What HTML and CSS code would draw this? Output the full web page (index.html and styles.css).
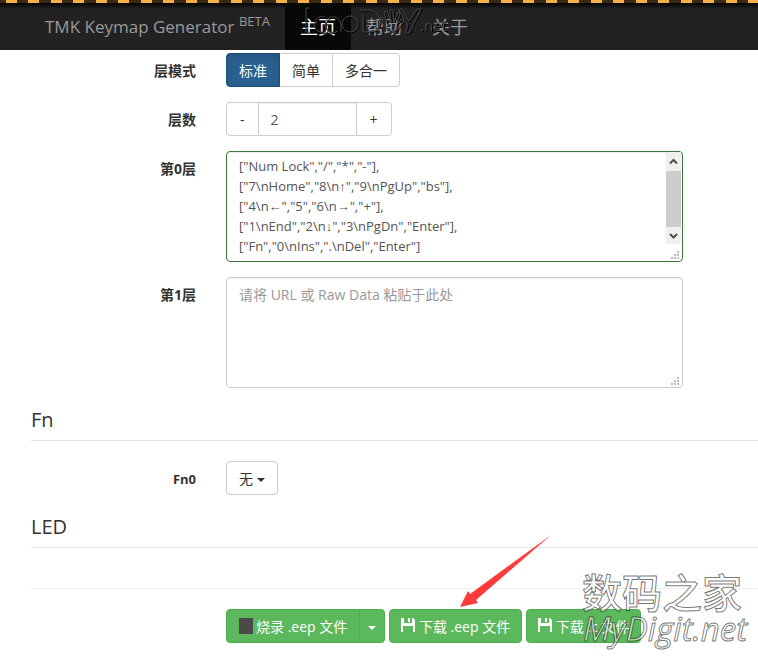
FILE: index.html
```html
<!DOCTYPE html>
<html lang="zh-CN">
<head>
<meta charset="utf-8">
<meta name="viewport" content="width=device-width, initial-scale=1">
<title>TMK Keymap Generator</title>
<link rel="stylesheet" href="styles.css">
</head>
<body>
<header class="navbar">
  <a class="brand" href="#">TMK Keymap Generator <sup class="beta">BETA</sup></a>
  <nav class="nav">
    <a class="nav-link active" href="#">主页</a>
    <a class="nav-link" href="#">帮助</a>
    <a class="nav-link" href="#">关于</a>
  </nav>
  <svg class="nav-mark" width="170" height="38" viewBox="0 0 170 38" aria-hidden="true">
    <g fill="none" stroke="#484848" stroke-linecap="round" stroke-linejoin="round">
      <path d="M5 4H2V28H5M21 13a8 8 0 1 0 0 15M37 28V20a8 8 0 1 0-3 7M38 20a8 8 0 1 1 16 0a8 8 0 1 1-16 0M56 6H66Q77 9 76 19Q74 29 62 28H59V11M98 5l7 12L113 5h4L105 29h-4l3-8-9-15z"/>
      <path d="M82 24l-6-9 2-2 5 6-3-11 3-1 4 11-1-12h3l1 12 4-10 2 1-3 11 5-5 2 2-7 9q-6 3-11-2z"/>
    </g>
    <text class="mark-text" x="116" y="27">.net</text>
  </svg>
</header>

<main class="page">
  <form class="form">
    <div class="row">
      <span class="label" id="mode-label">层模式</span>
      <div class="group" role="group" aria-labelledby="mode-label">
        <button type="button" class="btn primary">标准</button>
        <button type="button" class="btn">简单</button>
        <button type="button" class="btn">多合一</button>
      </div>
    </div>
    <div class="row">
      <label class="label" for="layers">层数</label>
      <div class="group">
        <button type="button" class="btn step">-</button>
        <input class="control count" id="layers" type="text" value="2">
        <button type="button" class="btn step">+</button>
      </div>
    </div>
    <div class="row">
      <label class="label" for="layer0">第0层</label>
      <div class="area">
        <textarea class="control valid" id="layer0" wrap="off">["Num Lock","/","*","-"],
["7\nHome","8\n↑","9\nPgUp","bs"],
["4\n←","5","6\n→","+"],
["1\nEnd","2\n↓","3\nPgDn","Enter"],
["Fn","0\nIns",".\nDel","Enter"]</textarea>
        <div class="scrollbar" aria-hidden="true">
          <svg width="15" height="19" viewBox="0 0 15 19"><path d="M4 11.500L7.500 8L11 11.500" fill="none" stroke="#505050" stroke-width="2"/></svg>
          <div class="thumb"></div>
          <svg width="15" height="17" viewBox="0 0 15 17"><path d="M4 7L7.500 10.500L11 7" fill="none" stroke="#505050" stroke-width="2"/></svg>
        </div>
      </div>
    </div>
    <div class="row">
      <label class="label" for="layer1">第1层</label>
      <div class="area">
        <textarea class="control" id="layer1" placeholder="请将 URL 或 Raw Data 粘贴于此处"></textarea>
      </div>
    </div>

    <h2 class="legend">Fn</h2>
    <div class="row">
      <span class="label latin" id="fn0-label">Fn0</span>
      <div class="group">
        <button type="button" class="btn" aria-labelledby="fn0-label">无 <span class="caret"></span></button>
      </div>
    </div>

    <h2 class="legend">LED</h2>
    <hr class="rule">
    <div class="row">
      <span></span>
      <div class="actions">
        <div class="group">
          <button type="button" class="btn success"><span class="chip"></span>烧录 .eep 文件</button>
          <button type="button" class="btn success toggle" aria-label="更多"><span class="caret"></span></button>
        </div>
        <button type="button" class="btn success download">
          <svg class="disk" width="14" height="14" viewBox="0 0 14 14" aria-hidden="true"><path fill="#fff" d="M0 0H3V5H11V0H12L14 2V14H12V8H2V14H0ZM7 0H9V4H7Z"/></svg>
          下载 .eep 文件</button>
        <button type="button" class="btn success download">
          <svg class="disk" width="14" height="14" viewBox="0 0 14 14" aria-hidden="true"><path fill="#fff" d="M0 0H3V5H11V0H12L14 2V14H12V8H2V14H0ZM7 0H9V4H7Z"/></svg>
          下载 .c 文件</button>
      </div>
    </div>
  </form>
  <svg class="arrow" width="92" height="74" viewBox="0 0 92 74" aria-hidden="true"><path fill="#ff3b3b" d="M0 73L8 57L10 60L91 1L16 66L18 69Z"/></svg>
  <svg class="stamp" width="176" height="100" viewBox="0 0 176 100" aria-hidden="true">
    <text class="stamp-cn" x="2" y="47">数码之家</text>
    <text class="stamp-en" x="3" y="80">MyDigit.net</text>
  </svg>
</main>
</body>
</html>
```

FILE: styles.css
```css
* { box-sizing: border-box; }

body {
  margin: 0;
  background: #fff;
  color: #333;
  font: 14px/20px "Open Sans", "Liberation Sans", "Noto Sans CJK SC", sans-serif;
}

button, input, textarea { font: inherit; color: inherit; }

.navbar {
  position: relative;
  display: flex;
  height: 50px;
  padding-left: 30px;
  background: linear-gradient(#000 3px, #0a0a0a 4px, #222 9px);
}

.navbar::before {
  content: "";
  position: absolute;
  z-index: 1;
  inset: 0 0 auto;
  height: 3px;
  background: repeating-linear-gradient(90deg, #3a2a12 0 6px, #f5b04c 6px 17px, #3a2a12 17px 28px, #f5b04c 28px 39px, #3a2a12 39px 45px);
}

.brand, .nav-link {
  padding: 17px 15px 13px;
  color: #999;
  font-size: 18px;
  text-decoration: none;
  white-space: nowrap;
}

.brand { font-size: 17px; }

.beta {
  font-size: 13px;
  line-height: 0;
  vertical-align: 7px;
}

.nav { display: flex; }

.nav-link.active {
  background: #080808;
  color: #fff;
}

.nav-mark {
  position: absolute;
  left: 304px;
  top: 4px;
  filter: drop-shadow(1px 1px 0 #000);
}

.mark-text {
  font: 15px "Open Sans", sans-serif;
  fill: #484848;
}

.page { position: relative; }

.form { padding: 3px 0 28px 31px; }

.row {
  display: grid;
  grid-template-columns: 165px minmax(0, 457px);
  column-gap: 30px;
  margin-bottom: 15px;
}

.label {
  padding-top: 8px;
  font-weight: 700;
  text-align: right;
}

.label.latin { font-size: 13px; }

.group { display: flex; }

.btn {
  height: 34px;
  padding: 7px 12px 5px;
  border: 1px solid #ccc;
  border-radius: 4px;
  background: #fff;
  white-space: nowrap;
}

.group > * + * { margin-left: -1px; }
.group > :not(:first-child) { border-top-left-radius: 0; border-bottom-left-radius: 0; }
.group > :not(:last-child) { border-top-right-radius: 0; border-bottom-right-radius: 0; }

.btn.step { padding-inline: 13px; }

.btn.primary {
  z-index: 1;
  border-color: #204d74;
  background: #286090;
  color: #fff;
  box-shadow: inset 0 3px 5px rgba(0, 0, 0, .125);
}

.btn.success {
  border-color: #4cae4c;
  background: #5cb85c;
  color: #fff;
}

.btn.toggle { padding-inline: 8px; }
.btn.download { padding-inline: 11px; }

.control {
  display: block;
  height: 34px;
  padding: 6px 12px;
  border: 1px solid #ccc;
  border-radius: 4px;
  background: #fff;
  color: #555;
  box-shadow: inset 0 1px 1px rgba(0, 0, 0, .075);
}

.count { width: 99px; }

.area { position: relative; }

textarea.control {
  width: 100%;
  height: 111px;
  padding-top: 7px;
  resize: none;
}

textarea.valid {
  padding-top: 4px;
  border-color: #3c763d;
  font-size: 13px;
  overflow: hidden;
}

/* resize grip */
.area::after {
  content: "";
  position: absolute;
  right: 4px;
  bottom: 3px;
  width: 8px;
  height: 8px;
  background:
    conic-gradient(#bbb 0 0) 6px 0 / 2px 2px no-repeat,
    conic-gradient(#bbb 0 0) 3px 3px / 2px 2px no-repeat,
    conic-gradient(#bbb 0 0) 6px 3px / 2px 2px no-repeat,
    conic-gradient(#bbb 0 0) 0 6px / 2px 2px no-repeat,
    conic-gradient(#bbb 0 0) 3px 6px / 2px 2px no-repeat,
    conic-gradient(#bbb 0 0) 6px 6px / 2px 2px no-repeat;
}

.scrollbar {
  position: absolute;
  top: 1px;
  right: 2px;
  bottom: 18px;
  display: flex;
  flex-direction: column;
  width: 15px;
  background: #f0f0f0;
}

.thumb {
  flex: 1;
  background: #cdcdcd;
}

::placeholder { color: #999; opacity: 1; }

.legend {
  margin: 0 0 20px;
  padding: 1px 0 4px;
  border-bottom: 1px solid #e5e5e5;
  font-size: 20px;
  font-weight: 400;
  line-height: 32px;
}

.rule {
  margin: 40px 0 20px;
  border: 0;
  border-top: 1px solid #eee;
}

.caret {
  display: inline-block;
  border: 4px solid transparent;
  border-top-color: currentColor;
  border-bottom: 0;
  vertical-align: middle;
}

.actions {
  display: flex;
  gap: 4px;
}

.chip {
  display: inline-block;
  width: 14px;
  height: 16px;
  margin-right: 3px;
  background: #4a4a4a;
  vertical-align: -2px;
}

.disk { vertical-align: 0; }

.arrow {
  position: absolute;
  left: 460px;
  top: 484px;
}

.stamp {
  position: absolute;
  left: 580px;
  top: 511px;
}

.stamp text {
  fill: rgba(255, 255, 255, .6);
  stroke: rgba(0, 0, 0, .55);
  stroke-width: 1px;
}

.stamp-cn { font: 500 40px "Noto Sans CJK SC", sans-serif; }
.stamp-en { font: italic 33px "Open Sans", sans-serif; }
```
